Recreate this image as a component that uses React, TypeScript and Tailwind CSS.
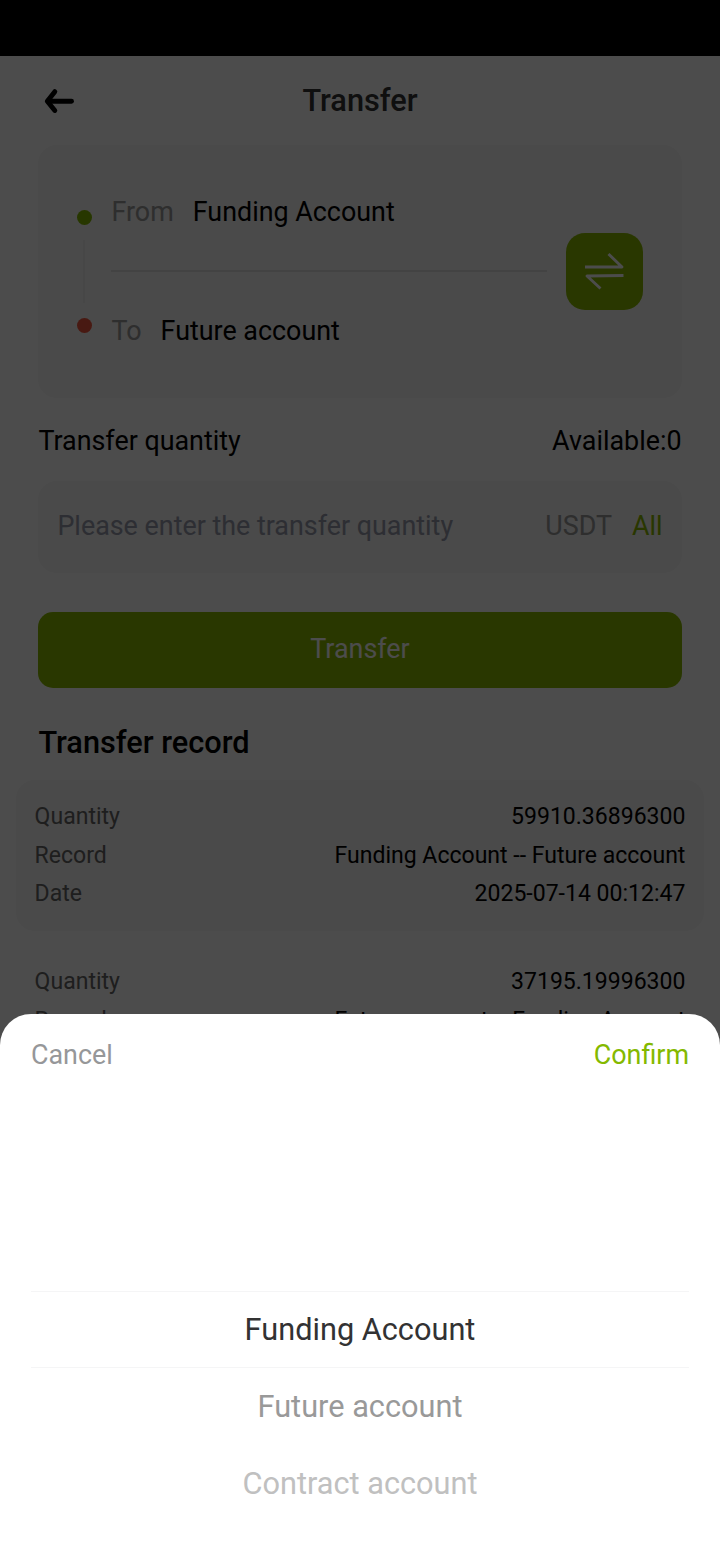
import { useState } from 'react';

const accounts = ['Funding Account', 'Future account', 'Contract account'];

const records = [
  {
    quantity: '59910.36896300',
    record: 'Funding Account -- Future account',
    date: '2025-07-14 00:12:47',
  },
  {
    quantity: '37195.19996300',
    record: 'Future account -- Funding Account',
  },
];

function RecordRow({ label, value }: { label: string; value: string }) {
  return (
    <div className="flex justify-between h-[38.4px] leading-[38.4px]">
      <span className="text-[#666]">{label}</span>
      <span>{value}</span>
    </div>
  );
}

export default function App() {
  const [selected, setSelected] = useState(0);

  const optionColor = (index: number) => {
    const distance = Math.abs(index - selected);
    if (distance === 0) return 'text-[#323233]';
    if (distance === 1) return 'text-[#999]';
    return 'text-[#c0c0c0]';
  };

  return (
    <div className="relative h-[1560px] w-[720px] overflow-hidden bg-white text-black text-[26.88px] font-['Roboto',sans-serif]">
      {/* Status bar */}
      <div className="h-14 bg-black" />

      {/* Header */}
      <div className="flex h-[89px] items-center px-[43px]">
        <button className="w-8">
          <svg width="32" height="26" viewBox="0 0 32 26" fill="none" stroke="#000" strokeWidth="4.9" strokeLinecap="round" strokeLinejoin="round" className="block">
            <path d="M11.800 3.700 4.300 13.300l7.500 9.200" />
            <path d="M5 13.300h23.500" />
          </svg>
        </button>
        <h1 className="flex-1 pt-px text-center text-[30.72px] font-medium text-[#323233]">Transfer</h1>
        <div className="w-8" />
      </div>

      <div className="px-[38.4px]">
        {/* Accounts */}
        <div className="flex h-[253px] items-center rounded-[19px] bg-[#f7f7f7] pr-[38.6px] pl-[38.6px]">
          <div className="flex w-[15px] flex-col items-center">
            <div className="size-[15px] rounded-full bg-[#84b900]" />
            <div className="my-[15px] h-[63px] w-[2px] bg-[#eee]" />
            <div className="size-[15px] rounded-full bg-[#f2563d]" />
          </div>
          <div className="ml-[19.5px] w-[436px]">
            <div className="flex h-[72px] items-start gap-[19px] pt-px leading-[1]">
              <span className="text-[#999]">From</span>
              <span>Funding Account</span>
            </div>
            <div className="h-[2px] bg-[#e2e2e2]" />
            <div className="flex h-[73px] items-end gap-[19px] leading-[1]">
              <span className="text-[#999]">To</span>
              <span>Future account</span>
            </div>
          </div>
          <button className="ml-auto flex size-[76.8px] items-center justify-center rounded-[19px] bg-[#8ab900]">
            <svg width="40" height="38" viewBox="0 0 40 38" fill="none" stroke="#fff" strokeWidth="2.9" strokeLinejoin="round">
              <path d="M0 15h37L23.500 2" />
              <path d="M38.500 23.500 2 24 15.500 36.500" />
            </svg>
          </button>
        </div>

        {/* Quantity */}
        <div className="flex h-[83px] items-center justify-between pt-[3px]">
          <span>Transfer quantity</span>
          <span>Available:0</span>
        </div>
        <div className="flex h-[92px] items-center rounded-[19px] bg-[#f7f7f7] px-[19px] pb-[2px]">
          <input
            className="min-w-0 flex-1 outline-none placeholder:text-[#969aac]"
            placeholder="Please enter the transfer quantity"
          />
          <span className="text-[#999]">USDT</span>
          <button className="ml-5 text-[#8ab900]">All</button>
        </div>
        <button className="mt-[38.5px] h-[76.5px] w-full rounded-[15px] bg-[#8ab900] pb-[2px] text-white">Transfer</button>

        <h2 className="mt-[34.5px] text-[30.72px] leading-10 font-medium">Transfer record</h2>
      </div>

      {/* Records */}
      <div className="mt-[17.7px] flex flex-col gap-[14px] px-4 text-[23.04px]">
        {records.map((item) => (
          <div key={item.quantity} className="rounded-[19px] pt-[18px] pr-[18.6px] pb-[18px] pl-[18.6px] first:bg-[#f7f7f7]">
            <RecordRow label="Quantity" value={item.quantity} />
            <RecordRow label="Record" value={item.record} />
            {item.date && <RecordRow label="Date" value={item.date} />}
          </div>
        ))}
      </div>

      {/* Overlay and account picker */}
      <div className="absolute inset-0 flex flex-col justify-end bg-black/70">
        <div className="h-[546.5px] rounded-t-[31px] bg-white">
          <div className="flex h-[84px] items-center justify-between px-[31px]">
            <button className="text-[#969799]">Cancel</button>
            <button className="text-[#84b900]">Confirm</button>
          </div>
          <div className="px-[31px] pt-[193px] text-[30.72px]">
            {accounts.map((name, index) => (
              <button
                key={name}
                onClick={() => setSelected(index)}
                className={`flex h-[77px] w-full items-center justify-center pt-[2px] ${optionColor(index)} ${index === selected ? 'border-y border-[#f5f5f6]' : ''}`}
              >
                {name}
              </button>
            ))}
          </div>
        </div>
      </div>
    </div>
  );
}
